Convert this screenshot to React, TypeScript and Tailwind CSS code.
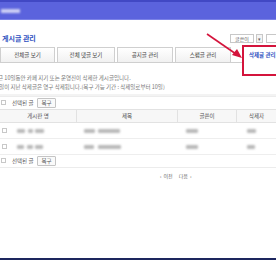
import React from "react";

const Blob = ({ w, ml = 0 }: { w: number; ml?: number }) => (
  <span
    className="inline-block h-[4px] bg-[#b9b9b9] blur-[0.8px] rounded-[1px]"
    style={{ width: w, marginLeft: ml }}
  />
);

const Check = () => (
  <span className="inline-block w-[5px] h-[5px] border border-[#c8c8c8] bg-white" />
);

const CheckRow = () => (
  <div className="h-[12px] flex items-center text-[5.5px] text-[#555]">
    <span className="ml-[1px]">
      <Check />
    </span>
    <span className="ml-[6px]">선택된 글</span>
    <span className="ml-[4px] h-[10px] px-[3px] flex items-center border border-[#c4c4c4] rounded-[1px] bg-[#fafafa]">
      복구
    </span>
  </div>
);

export default function App() {
  const tabs = [
    { label: "전체글 보기", w: 55 },
    { label: "전체 댓글 보기", w: 58 },
    { label: "공지글 관리", w: 56 },
    { label: "스팸글 관리", w: 56 },
  ];
  const rows = [
    { board: [[8, 17], [5, 3], [9, 2]], title: [[11, 82], [22, 3]], a: 12, d: 9 },
    { board: [[7, 17], [6, 3], [8, 2]], title: [[10, 82], [23, 4]], a: 12, d: 8 },
  ];
  return (
    <div className="relative w-[276px] h-[260px] overflow-hidden bg-white flex flex-col font-['Noto_Sans_CJK_KR',sans-serif]">
      {/* header bar */}
      <div className="h-[20px] shrink-0 bg-[#5b63dd] border-t-[2px] border-[#4148c4] border-b border-b-[#7b82e6] flex items-center">
        <span className="ml-[1px] w-[19px] h-[4px] bg-white/70 blur-[1px]" />
      </div>

      {/* title row */}
      <div className="mt-[13px] h-[11px] flex items-center justify-between">
        <span className="ml-[2px] text-[7px] font-bold text-[#2d4fc0] leading-none">게시글 관리</span>
        <div className="flex items-center gap-[2px] mr-[-4px]">
          <span className="w-[24px] h-[9px] border border-[#c8c8c8] text-[5px] text-[#666] flex items-center justify-center bg-white">
            글쓴이
          </span>
          <span className="w-[7px] h-[9px] border border-[#c8c8c8] text-[5px] text-[#666] flex items-center justify-center bg-[#f4f4f4]">
            ▾
          </span>
          <span className="ml-[1px] w-[14px] h-[9px] border border-[#c8c8c8] bg-white" />
        </div>
      </div>

      {/* tabs */}
      <div className="mt-[3px] h-[16px] flex items-end">
        <div className="flex gap-[2px] h-[16px] border-b border-[#cfcfcf]">
          {tabs.map((t) => (
            <div
              key={t.label}
              className="h-[16px] border border-[#cfcfcf] bg-gradient-to-b from-white to-[#f1f1f1] text-[5.5px] text-[#444] flex items-center justify-center"
              style={{ width: t.w }}
            >
              {t.label}
            </div>
          ))}
          <div className="w-[10px]" />
        </div>
        <div className="flex-1 h-[16px] flex items-center pl-[6px] text-[5.5px] font-bold text-[#2d4fc0] whitespace-nowrap">
          삭제글 관리
        </div>
      </div>

      {/* info text */}
      <div className="mt-[11px] text-[5.5px] leading-[9px] text-[#777] whitespace-nowrap ml-[-7px]">
        <div>최근 10일동안 카페 지기 또는 운영진이 삭제한 게시글입니다.</div>
        <div>10일이 지난 삭제글은 영구 삭제됩니다.(복구 가능 기간 : 삭제일로부터 10일)</div>
      </div>

      <div className="mt-[2px] h-[3px] bg-[#f3f3f3] border-b border-[#ececec]" />

      <CheckRow />

      {/* table header */}
      <div className="h-[14px] flex items-center bg-[#f7f7f7] border-y border-[#e2e2e2] text-[5.5px] text-[#555]">
        <div className="w-[77px] text-center border-r border-[#e2e2e2] h-full flex items-center justify-center">게시판 명</div>
        <div className="w-[101px] text-center border-r border-[#e2e2e2] h-full flex items-center justify-center">제목</div>
        <div className="w-[59px] text-center border-r border-[#e2e2e2] h-full flex items-center justify-center">글쓴이</div>
        <div className="flex-1 text-center h-full flex items-center justify-center">삭제자</div>
      </div>

      {rows.map((r, i) => (
        <div key={i} className="h-[16px] flex items-center border-b border-[#eeeeee]">
          <span className="ml-[2px] flex items-center">
            <Check />
          </span>
          <div className="w-[72px] flex items-center">
            {r.board.map(([w, ml], j) => (
              <Blob key={j} w={w} ml={j === 0 ? 10 : ml} />
            ))}
          </div>
          <div className="w-[101px] flex items-center pl-[5px]">
            {r.title.map(([w, ml], j) => (
              <Blob key={j} w={w} ml={j === 0 ? 0 : ml} />
            ))}
          </div>
          <div className="w-[59px] flex items-center pl-[6px]">
            <Blob w={r.a} />
          </div>
          <div className="flex-1 flex items-center pl-[8px]">
            <Blob w={r.d} />
          </div>
        </div>
      ))}

      <CheckRow />
      <div className="h-[1px] bg-[#ececec]" />

      {/* pagination */}
      <div className="mt-[4px] h-[8px] flex items-center text-[5px] text-[#666] pl-[160px] gap-[2px]">
        <span>‹</span>
        <span>이전</span>
        <span className="ml-[4px]">다음</span>
        <span>›</span>
      </div>

      <div className="flex-1" />
      <div className="h-[2px] bg-[#1d265e]" />

      {/* annotation overlay */}
      <div className="absolute left-[242px] top-[45px] w-[40px] h-[31px] border-[2px] border-[#d4143c]" />
      <svg className="absolute left-0 top-0" width="276" height="260" viewBox="0 0 276 260">
        <line x1="207" y1="34" x2="236" y2="54" stroke="#d4143c" strokeWidth="1.6" />
        <polygon points="242,58 232,55 237,49" fill="#d4143c" />
      </svg>
    </div>
  );
}
